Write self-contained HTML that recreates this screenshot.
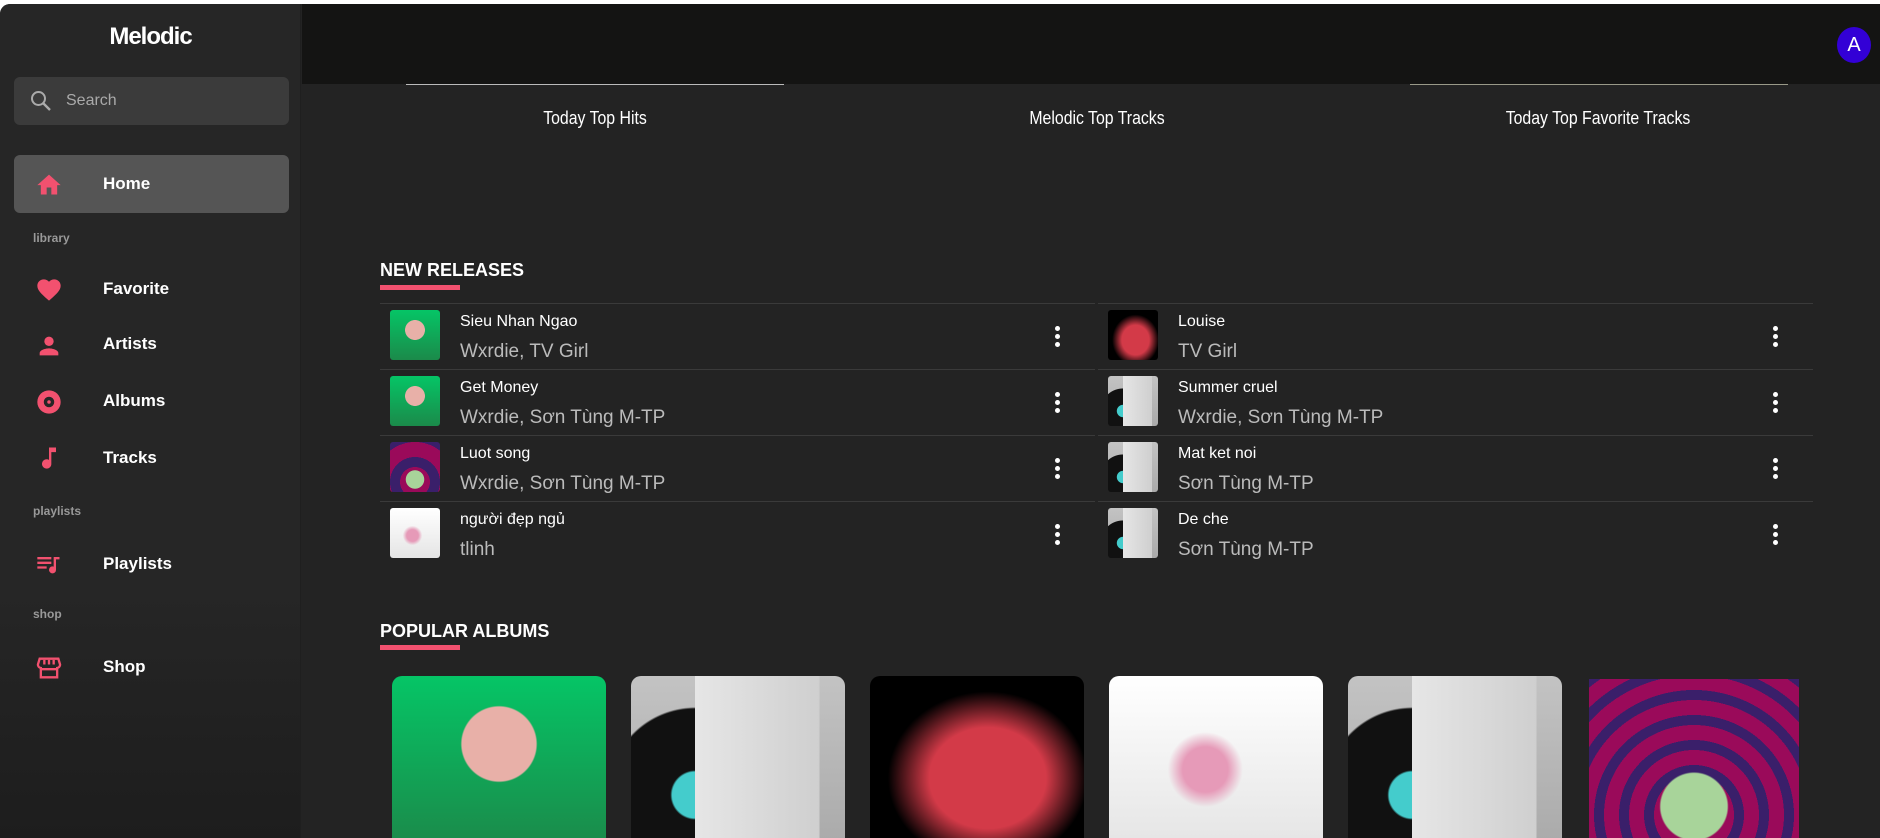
<!DOCTYPE html>
<html><head><meta charset="utf-8"><style>
*{box-sizing:border-box;margin:0;padding:0}
body{width:1880px;height:838px;overflow:hidden;background:#fff;font-family:"Liberation Sans",sans-serif;position:relative}
.app{position:absolute;left:0;top:4px;width:1880px;height:834px;background:#232323;border-top-left-radius:10px;overflow:hidden}
.side{position:absolute;left:0;top:0;width:301px;height:834px;background:linear-gradient(#262626 70%,#1d1d1d);border-right:1px solid #1f1f1f}
.logo{position:absolute;top:19px;width:301px;text-align:center;color:#fff;font-weight:bold;font-size:24px;letter-spacing:-1px}
.search{position:absolute;left:14px;top:73px;width:275px;height:48px;background:#3b3b3b;border-radius:6px}
.search span{position:absolute;left:52px;top:15px;color:#aaa;font-size:16px}
.home{position:absolute;left:14px;top:151px;width:275px;height:58px;background:#555;border-radius:6px}
.item{position:absolute;left:103px;color:#fff;font-weight:bold;font-size:17px}
.lab{position:absolute;left:33px;color:#999;font-size:12px;font-weight:bold}
.ic{position:absolute;left:35px}
.top{position:absolute;left:302px;top:0;width:1578px;height:80px;background:#141413}
.av{position:absolute;left:1837px;top:23px;width:34px;height:36px;border-radius:50%;background:#3300d6;color:#fff;text-align:center;line-height:36px;font-size:20px}
.ct{position:absolute;top:104px;color:#fff;font-size:18px;transform:translateX(-50%) scaleX(0.88);white-space:nowrap}
.h{position:absolute;left:380px;color:#fff;font-weight:bold;font-size:18px}
.ul{position:absolute;left:380px;width:80px;height:5px;background:#f2516f}
.row{position:absolute;height:66px;width:715px;border-top:1px solid #3a3a3a}
.th{position:absolute;left:10px;top:6px;width:50px;height:50px;border-radius:3px}
.t{position:absolute;left:80px;top:9px;color:#fff;font-size:16px}
.s{position:absolute;left:80px;top:37px;color:#bbb;font-size:19px}
.k{position:absolute;left:675px;top:22px;width:5px}
.k i{display:block;width:5px;height:5px;border-radius:50%;background:#fff;margin-bottom:3px}
.card{position:absolute;top:672px;width:214px;height:170px;border-radius:10px 10px 0 0}
.g{background:radial-gradient(circle at 50% 40%,#e8b0a8 0 25%,transparent 26%),linear-gradient(#05c566,#1b8a4a)}
.v{background:linear-gradient(90deg,transparent 30%,#e6e6e6 30%,#cfcfcf 88%,transparent 88%),radial-gradient(circle at 30% 70%,#4cc 0 12%,#111 13% 45%,transparent 46%),linear-gradient(#c3c3c3,#aaa)}
.r{background:radial-gradient(ellipse at 55% 60%,#d33a48 0 35%,#000 60%)}
.p{background:radial-gradient(circle at 45% 55%,#e69ab8 0 15%,transparent 25%),linear-gradient(#fff,#e5e5e5)}
.m{background:radial-gradient(circle at 50% 75%,#a8d49a 0 20%,transparent 21%),repeating-radial-gradient(circle at 50% 80%,#9a0a5a 0 15px,#3a1f6a 15px 25px)}
</style></head><body><div class="app">
<div class="side">
<div class="logo">Melodic</div>
<div class="search"><svg style="position:absolute;left:15px;top:12px" width="24" height="24" viewBox="0 0 24 24"><circle cx="9.5" cy="9.5" r="6.5" fill="none" stroke="#aaa" stroke-width="2"/><path d="M14.5 14.5L21 21" stroke="#aaa" stroke-width="2.4"/></svg><span>Search</span></div>
<div class="home"></div>
<svg class="ic" style="top:168px" width="28" height="24" viewBox="0 0 24 20"><path d="M10 19v-6h4v6h5v-8h3L12 2 2 11h3v8z" fill="#f2516f"/></svg>
<div class="item" style="top:170px">Home</div>
<div class="lab" style="top:227px">library</div>
<svg class="ic" style="top:272px" width="28" height="26" viewBox="0 0 24 22"><path d="M12 21l-1.5-1.3C5.4 15.1 2 12 2 8.2 2 5.1 4.4 2.7 7.5 2.7c1.7 0 3.4.8 4.5 2.1 1.1-1.3 2.8-2.1 4.5-2.1 3.1 0 5.5 2.4 5.5 5.5 0 3.8-3.4 6.9-8.5 11.5z" fill="#f2516f"/></svg>
<div class="item" style="top:275px">Favorite</div>
<svg class="ic" style="top:328px" width="28" height="28" viewBox="0 0 24 24"><circle cx="12" cy="8" r="4" fill="#f2516f"/><path d="M4 20v-2c0-2.7 5.3-4 8-4s8 1.3 8 4v2z" fill="#f2516f"/></svg>
<div class="item" style="top:330px">Artists</div>
<svg class="ic" style="top:384px" width="28" height="28" viewBox="0 0 24 24"><circle cx="12" cy="12" r="10" fill="#f2516f"/><circle cx="12" cy="12" r="4.5" fill="#262626"/><circle cx="12" cy="12" r="1.5" fill="#f2516f"/></svg>
<div class="item" style="top:387px">Albums</div>
<svg class="ic" style="top:440px" width="28" height="28" viewBox="0 0 24 24"><path d="M12 3v10.6A4 4 0 1 0 14 17V7h4V3z" fill="#f2516f"/></svg>
<div class="item" style="top:444px">Tracks</div>
<div class="lab" style="top:500px">playlists</div>
<svg class="ic" style="top:546px" width="28" height="28" viewBox="0 0 24 24"><path d="M2 6h12v2H2zm0 4h12v2H2zm0 4h8v2H2zm14-8h5v2h-3v9a3 3 0 1 1-2-2.8z" fill="#f2516f"/></svg>
<div class="item" style="top:550px">Playlists</div>
<div class="lab" style="top:603px">shop</div>
<svg class="ic" style="top:650px" width="28" height="28" viewBox="0 0 24 24"><path d="M4 4h16l1.5 5a3 3 0 0 1-2.5 3V20H5v-8a3 3 0 0 1-2.5-3z" fill="none" stroke="#f2516f" stroke-width="2"/><path d="M8 5v4M12 5v4M16 5v4M5 13h14" stroke="#f2516f" stroke-width="2"/></svg>
<div class="item" style="top:653px">Shop</div>
</div>
<div class="top"></div>
<div class="av">A</div>
<div style="position:absolute;left:406px;top:80px;width:378px;height:1px;background:#bbb"></div>
<div style="position:absolute;left:1410px;top:80px;width:378px;height:1px;background:#998"></div>
<div class="ct" style="left:595px">Today Top Hits</div>
<div class="ct" style="left:1097px">Melodic Top Tracks</div>
<div class="ct" style="left:1598px">Today Top Favorite Tracks</div>
<div class="h" style="top:256px">NEW RELEASES</div><div class="ul" style="top:281px"></div>
<div class="row" style="left:380px;top:299px"><div class="th g"></div><div class="t">Sieu Nhan Ngao</div><div class="s">Wxrdie, TV Girl</div><div class="k"><i></i><i></i><i></i></div></div>
<div class="row" style="left:380px;top:365px"><div class="th g"></div><div class="t">Get Money</div><div class="s">Wxrdie, Sơn Tùng M-TP</div><div class="k"><i></i><i></i><i></i></div></div>
<div class="row" style="left:380px;top:431px"><div class="th m"></div><div class="t">Luot song</div><div class="s">Wxrdie, Sơn Tùng M-TP</div><div class="k"><i></i><i></i><i></i></div></div>
<div class="row" style="left:380px;top:497px"><div class="th p"></div><div class="t">người đẹp ngủ</div><div class="s">tlinh</div><div class="k"><i></i><i></i><i></i></div></div>
<div class="row" style="left:1098px;top:299px"><div class="th r"></div><div class="t">Louise</div><div class="s">TV Girl</div><div class="k"><i></i><i></i><i></i></div></div>
<div class="row" style="left:1098px;top:365px"><div class="th v"></div><div class="t">Summer cruel</div><div class="s">Wxrdie, Sơn Tùng M-TP</div><div class="k"><i></i><i></i><i></i></div></div>
<div class="row" style="left:1098px;top:431px"><div class="th v"></div><div class="t">Mat ket noi</div><div class="s">Sơn Tùng M-TP</div><div class="k"><i></i><i></i><i></i></div></div>
<div class="row" style="left:1098px;top:497px"><div class="th v"></div><div class="t">De che</div><div class="s">Sơn Tùng M-TP</div><div class="k"><i></i><i></i><i></i></div></div>
<div class="h" style="top:617px">POPULAR ALBUMS</div><div class="ul" style="top:641px"></div>
<div class="card g" style="left:392px"></div>
<div class="card v" style="left:631px"></div>
<div class="card r" style="left:870px"></div>
<div class="card p" style="left:1109px"></div>
<div class="card v" style="left:1348px"></div>
<div class="card m" style="left:1589px;top:675px;width:210px;border-radius:0"></div>
</div></body></html>
